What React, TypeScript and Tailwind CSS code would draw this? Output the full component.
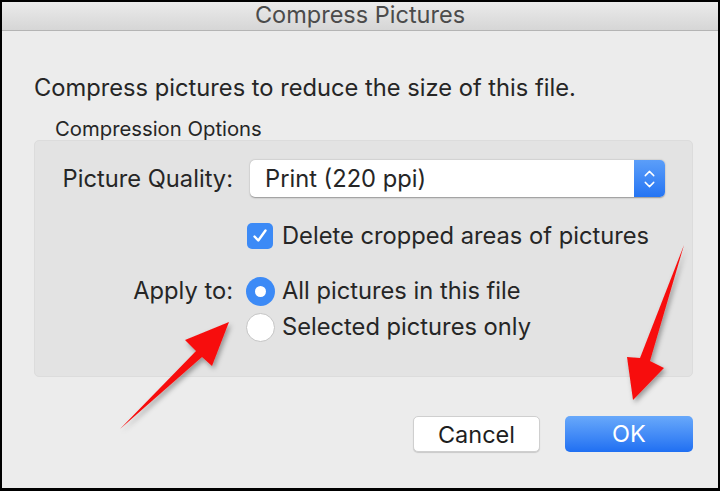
import { ChevronDown, ChevronUp } from 'lucide-react';

function Arrows() {
  return (
    <svg
      className="absolute inset-0 pointer-events-none"
      width={720}
      height={491}
      viewBox="0 0 720 491"
    >
      <defs>
        <filter id="shadow" x="-20%" y="-20%" width="140%" height="140%">
          <feDropShadow dx="2" dy="3" stdDeviation="2.5" floodColor="#000" floodOpacity="0.35" />
        </filter>
      </defs>
      {/* left arrow pointing at the radio buttons */}
      <polygon
        points="120,429 196,351 185,340 229,322 212,366 202,357"
        fill="#f70f0f"
        filter="url(#shadow)"
      />
      {/* right arrow pointing at OK */}
      <polygon
        points="684,245 650,361 664,368 633,400 627,357 640,358"
        fill="#f70f0f"
        filter="url(#shadow)"
      />
    </svg>
  );
}

export default function App() {
  return (
    <div className="relative w-[720px] h-[491px] overflow-hidden bg-black p-[2px] pb-[3px] font-['Inter','Liberation_Sans',sans-serif] text-[#262626]">
      <div className="flex flex-col h-full bg-[#ececec]">
        {/* Title bar */}
        <div className="h-[29px] shrink-0 flex items-center justify-center bg-gradient-to-b from-[#ebebeb] to-[#d6d6d6] border-b border-[#b4b4b4]">
          <span className="text-[23.5px] leading-none text-[#4b4b4b] -mt-[2px]">Compress Pictures</span>
        </div>

        <div className="flex flex-col pl-[32px] pr-[25px]">
          <p className="mt-[44px] text-[23.7px] leading-[26px]">
            Compress pictures to reduce the size of this file.
          </p>
          <p className="mt-[17px] pl-[21px] text-[20.3px] leading-[22px]">Compression Options</p>

          {/* Group box */}
          <div className="mt-[0px] rounded-[5px] bg-[#e3e3e3] border border-[#dcdcdc] pt-[19px] pb-[34px] pr-[27px]">
            <div className="flex items-center h-[37px]">
              <span className="w-[198px] text-right text-[23.7px]">Picture Quality:</span>
              <div className="ml-[17px] flex-1 flex h-[37px] rounded-[5px] bg-white shadow-[0_0.5px_1.5px_rgba(0,0,0,0.35)]">
                <span className="flex-1 flex items-center pl-[15px] text-[23.7px]">Print (220 ppi)</span>
                <div className="w-[31px] flex flex-col items-center justify-center rounded-r-[5px] bg-gradient-to-b from-[#5b9ef9] to-[#2474f3]">
                  <ChevronUp className="w-[17px] h-[17px] text-white -mb-[3px]" strokeWidth={2} />
                  <ChevronDown className="w-[17px] h-[17px] text-white -mt-[3px]" strokeWidth={2} />
                </div>
              </div>
            </div>

            <div className="mt-[25px] flex items-center h-[28px] pl-[212px]">
              <div className="w-[26px] h-[26px] rounded-[5px] bg-[#3c8af6] flex items-center justify-center">
                <svg width="18" height="18" viewBox="0 0 18 18">
                  <path d="M3.5 9.5 L7.3 13.5 L14.5 3.5" fill="none" stroke="white" strokeWidth="2.4" strokeLinecap="round" strokeLinejoin="round" />
                </svg>
              </div>
              <span className="ml-[9px] text-[23.7px]">Delete cropped areas of pictures</span>
            </div>

            <div className="mt-[26px] flex items-center h-[30px]">
              <span className="w-[198px] text-right text-[23.7px]">Apply to:</span>
              <div className="ml-[13px] w-[29px] h-[29px] rounded-full bg-[#3c8af6] flex items-center justify-center">
                <div className="w-[11px] h-[11px] rounded-full bg-white" />
              </div>
              <span className="ml-[7px] text-[23.7px]">All pictures in this file</span>
            </div>

            <div className="mt-[6px] flex items-center h-[30px] pl-[211px]">
              <div className="w-[29px] h-[29px] rounded-full bg-white border border-[#c4c4c4]" />
              <span className="ml-[7px] text-[23.7px]">Selected pictures only</span>
            </div>
          </div>

          {/* Buttons */}
          <div className="mt-[39px] flex justify-end gap-[25px]">
            <button
              type="button"
              className="w-[127px] h-[36px] rounded-[5px] bg-white border border-[#cfcfcf] shadow-[0_1px_1px_rgba(0,0,0,0.15)] text-[23.5px] text-[#1e1e1e]"
            >
              Cancel
            </button>
            <button
              type="button"
              className="w-[128px] h-[36px] rounded-[5px] bg-gradient-to-b from-[#68a8fa] to-[#1f6ff2] text-[23.5px] text-white"
            >
              OK
            </button>
          </div>
        </div>
      </div>
      <Arrows />
    </div>
  );
}
